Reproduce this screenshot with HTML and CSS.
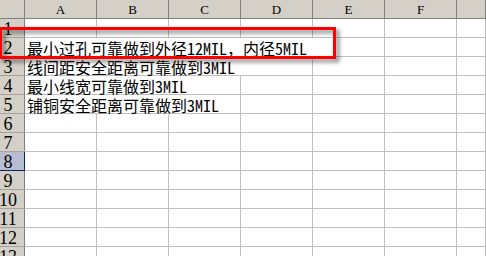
FILE: index.html
```html
<!DOCTYPE html>
<html lang="zh-CN">
  <head>
    <meta charset="UTF-8" />
    <title>Sheet1</title>
    <link rel="stylesheet" href="styles.css">
  </head>
  <body>
    <div class="sheet" id="sheet"></div>
    <div class="mark"></div>

    <script>
      // column letters, last column is cut off by the window
      const cols = ["A", "B", "C", "D", "E", "F", ""];
      // row -> [text, number of columns the text runs over]
      const data = {
        2: ["最小过孔可靠做到外径12MIL，内径5MIL", 5],
        3: ["线间距安全距离可靠做到3MIL", 4],
        4: ["最小线宽可靠做到3MIL", 3],
        5: ["铺铜安全距离可靠做到3MIL", 3],
      };
      const selectedRow = 8;

      const sheet = document.getElementById("sheet");
      let html = '<div class="corner"></div>';
      cols.forEach((c) => {
        html += `<div class="colhead">${c}</div>`;
      });
      for (let r = 1; r <= 13; r++) {
        const sel = r === selectedRow ? " selected" : "";
        html += `<div class="rowhead${sel}"><span>${r}</span></div>`;
        const row = data[r];
        let i = 0;
        if (row) {
          html += `<div class="cell span${row[1]}">${row[0]}</div>`;
          i = row[1];
        }
        for (; i < cols.length; i++) {
          html += '<div class="cell"></div>';
        }
      }
      sheet.innerHTML = html;
    </script>
  </body>
</html>
```

FILE: styles.css
```css
body {
  margin: 0;
  width: 486px;
  height: 256px;
  overflow: hidden;
  position: relative;
  background: #fff;
}
.sheet {
  display: grid;
  grid-template-columns: 25px repeat(6, 72px) 1fr;
  grid-auto-rows: 19px;
  width: 486px;
  background: #fff;
}
.corner,
.colhead {
  background: #d4d0c8;
  border-right: 1px solid #808080;
  border-bottom: 1px solid #808080;
  box-sizing: border-box;
}
.colhead {
  display: flex;
  justify-content: center;
  align-items: flex-end;
  padding-bottom: 2px;
  font-family: "Liberation Serif", serif;
  font-size: 13px;
  line-height: 12px;
  color: #000;
}
.rowhead {
  background: #d4d0c8;
  border-right: 1px solid #808080;
  border-bottom: 1px solid #a6a39c;
  box-sizing: border-box;
  display: flex;
  justify-content: center;
  align-items: flex-end;
  padding-right: 8px;
  font-family: "Liberation Serif", serif;
  font-size: 18px;
  line-height: 16px;
  color: #000;
  overflow: hidden;
}
.rowhead.selected {
  background: #b6bdd2;
  border-right-color: #0a246a;
  border-bottom-color: #0a246a;
}
.cell {
  border-right: 1px solid #c0c0c0;
  border-bottom: 1px solid #c0c0c0;
  box-sizing: border-box;
  display: flex;
  align-items: flex-end;
  padding-left: 2px;
  white-space: nowrap;
  font-family: "Noto Sans Mono CJK SC", "Noto Sans CJK SC", monospace;
  font-size: 16px;
  line-height: 16px;
  color: #000;
  min-width: 0;
}
.span3 {
  grid-column: span 3;
}
.span4 {
  grid-column: span 4;
}
.span5 {
  grid-column: span 5;
}
.mark {
  position: absolute;
  left: -1px;
  top: 27px;
  width: 337px;
  height: 32px;
  box-sizing: border-box;
  border: 3px solid #ff0000;
  filter: drop-shadow(3px 3px 2px rgba(0, 0, 0, 0.55));
}
```
